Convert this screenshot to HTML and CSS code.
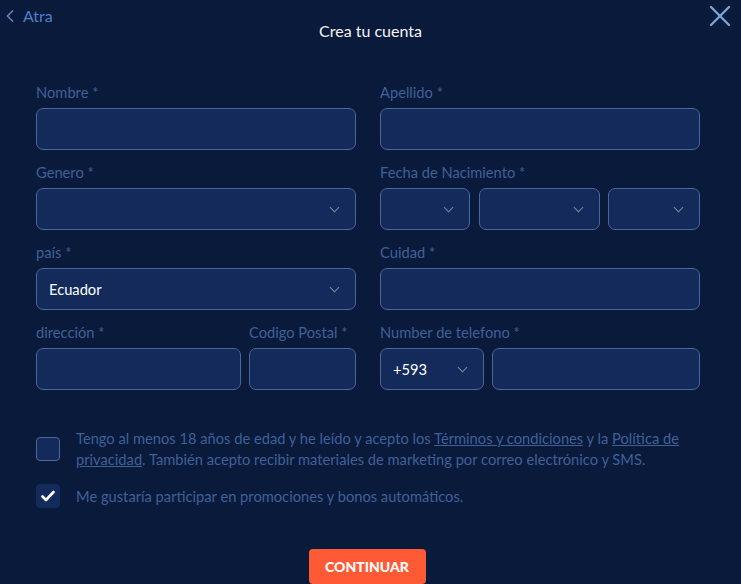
FILE: index.html
```html
<!DOCTYPE html>
<html lang="es">
<head>
    <meta charset="UTF-8">
    <meta name="viewport" content="width=device-width, initial-scale=1.0">
    <title>Crea tu cuenta</title>
    <link rel="stylesheet" href="styles.css">
</head>
<body>
    <header class="top-bar">
        <a class="back-link" href="#">
            <svg width="10" height="14" viewBox="0 0 10 14"><path d="M8 1.5 L2.5 7 L8 12.5" fill="none" stroke="#5f86c4" stroke-width="1.6"/></svg>
            <span>Atra</span>
        </a>
        <h1 class="title">Crea tu cuenta</h1>
        <button class="close-btn" aria-label="Cerrar">
            <svg width="22" height="22" viewBox="0 0 22 22"><path d="M2 2 L20 20 M20 2 L2 20" stroke="#7fa3d9" stroke-width="2.4" stroke-linecap="round"/></svg>
        </button>
    </header>

    <form class="signup">
        <div class="fields">
            <div class="field">
                <label>Nombre *</label>
                <div class="box"></div>
            </div>
            <div class="field">
                <label>Apellido *</label>
                <div class="box"></div>
            </div>

            <div class="field">
                <label>Genero *</label>
                <div class="box select"></div>
            </div>
            <div class="field">
                <label>Fecha de Nacimiento *</label>
                <div class="split date-split">
                    <div class="box select"></div>
                    <div class="box select"></div>
                    <div class="box select"></div>
                </div>
            </div>

            <div class="field">
                <label>país *</label>
                <div class="box select"><span class="value">Ecuador</span></div>
            </div>
            <div class="field">
                <label>Cuidad *</label>
                <div class="box"></div>
            </div>

            <div class="split address-split">
                <div class="field">
                    <label>dirección *</label>
                    <div class="box"></div>
                </div>
                <div class="field">
                    <label>Codigo Postal *</label>
                    <div class="box"></div>
                </div>
            </div>
            <div class="field">
                <label>Number de telefono *</label>
                <div class="split phone-split">
                    <div class="box select"><span class="value">+593</span></div>
                    <div class="box"></div>
                </div>
            </div>
        </div>

        <div class="checks">
            <div class="check-row">
                <span class="checkbox"></span>
                <p>Tengo al menos 18 años de edad y he leído y acepto los <a href="#">Términos y condiciones</a> y la <a href="#">Política de privacidad</a>. También acepto recibir materiales de marketing por correo electrónico y SMS.</p>
            </div>
            <div class="check-row">
                <span class="checkbox checked">
                    <svg width="14" height="12" viewBox="0 0 14 12"><path d="M1.5 6.5 L5 10 L12.5 2" fill="none" stroke="#ffffff" stroke-width="2.6" stroke-linecap="round" stroke-linejoin="round"/></svg>
                </span>
                <p>Me gustaría participar en promociones y bonos automáticos.</p>
            </div>
        </div>

        <div class="actions">
            <button type="submit" class="continue">CONTINUAR</button>
        </div>
    </form>
</body>
</html>
```

FILE: styles.css
```css
/* General Styles */
body {
    font-family: Lato, "Open Sans", Arial, sans-serif;
    margin: 0;
    height: 584px;
    overflow: hidden;
    background-color: #0a1a3b;
    color: #ffffff;
}

.top-bar {
    display: grid;
    grid-template-columns: 1fr auto 1fr;
    align-items: start;
    height: 85px;
}

.back-link {
    display: flex;
    align-items: center;
    gap: 8px;
    margin: 6px 0 0 5px;
    color: #4f7fc9;
    text-decoration: none;
    font-size: 16px;
}

.title {
    margin: 21px 0 0;
    font-size: 16px;
    font-weight: normal;
    color: #f2f4f8;
}

.close-btn {
    justify-self: end;
    margin: 5px 10px 0 0;
    padding: 0;
    background: none;
    border: none;
    cursor: pointer;
}

.signup {
    padding: 0 41px 0 36px;
}

.fields {
    display: grid;
    grid-template-columns: 320px 320px;
    column-gap: 24px;
    row-gap: 15px;
}

.field label {
    display: block;
    position: relative;
    top: -1px;
    height: 17px;
    line-height: 17px;
    margin-bottom: 6px;
    font-size: 14.7px;
    color: #3e6199;
    white-space: nowrap;
}

.box {
    box-sizing: border-box;
    height: 42px;
    display: flex;
    align-items: center;
    padding: 0 12px 1px;
    background-color: #132a5a;
    border: 1px solid #4a6799;
    border-radius: 7px;
}

.box .value {
    font-size: 14.7px;
    color: #ffffff;
}

.select {
    position: relative;
}

.select::after {
    content: "";
    position: absolute;
    right: 17px;
    top: 15px;
    width: 6px;
    height: 6px;
    border-right: 1.6px solid #7a8699;
    border-bottom: 1.6px solid #7a8699;
    transform: rotate(45deg);
}

.split {
    display: grid;
    column-gap: 8px;
}

.date-split {
    grid-template-columns: 90px 121px 92px;
    column-gap: 8.5px;
}

.address-split {
    grid-template-columns: 205px 107px;
}

.phone-split {
    grid-template-columns: 104px 208px;
}

.checks {
    margin-top: 38px;
    display: flex;
    flex-direction: column;
    gap: 14px;
}

.check-row {
    display: flex;
    align-items: center;
    gap: 16px;
}

.check-row p {
    margin: 0;
    width: 624px;
    font-size: 14.7px;
    line-height: 21px;
    color: #3e6199;
}

.check-row a {
    color: #3e6199;
}

.checkbox {
    flex: none;
    box-sizing: border-box;
    width: 24px;
    height: 24px;
    display: flex;
    align-items: center;
    justify-content: center;
    background-color: #132a5a;
    border: 1px solid #4a6799;
    border-radius: 4px;
}

.checkbox.checked {
    border-color: #132a5a;
}

.actions {
    display: flex;
    justify-content: center;
    margin-top: 41px;
}

.continue {
    width: 117px;
    height: 35px;
    margin-right: 2px;
    background-color: #ff5a36;
    color: #ffffff;
    border: none;
    border-radius: 4px;
    font-family: Lato, Arial, sans-serif;
    font-weight: 900;
    font-size: 14px;
    cursor: pointer;
}
```
